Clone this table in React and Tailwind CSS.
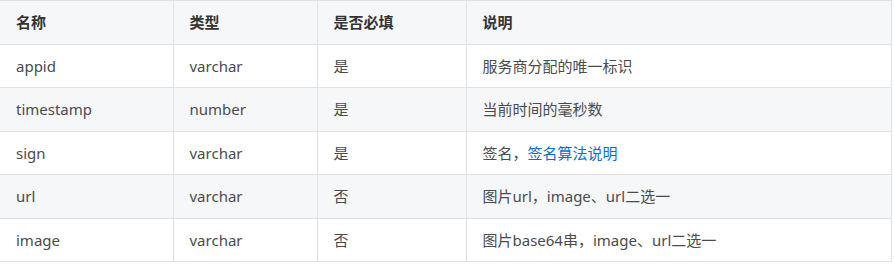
export default function App() {
  const rows = [
    ["appid", "varchar", "是", <>服务商分配的唯一标识</>],
    ["timestamp", "number", "是", <>当前时间的毫秒数</>],
    ["sign", "varchar", "是", <>签名，<a className="text-[#0a6ed1]">签名算法说明</a></>],
    ["url", "varchar", "否", <>图片url，image、url二选一</>],
    ["image", "varchar", "否", <>图片base64串，image、url二选一</>],
  ];
  return (
    <div className="w-[894px] h-[264px] bg-white" style={{ fontFamily: '"Noto Sans", "Noto Sans CJK SC", sans-serif' }}>
      <table className="w-[892px] border-collapse text-[15px] table-fixed">
        <colgroup>
          <col className="w-[173px]" />
          <col className="w-[144px]" />
          <col className="w-[149px]" />
          <col />
        </colgroup>
        <thead>
          <tr className="bg-[#f6f7f9] h-[43.5px]">
            {["名称", "类型", "是否必填", "说明"].map((h, i) => (
              <th key={i} className={`text-left font-bold text-[#333] px-4 border-t border-b border-r border-[#dfe2e5] ${i === 0 ? "border-l-0" : "border-l"}`}>
                {h}
              </th>
            ))}
          </tr>
        </thead>
        <tbody>
          {rows.map((r, ri) => (
            <tr key={ri} className={`h-[43.5px] ${ri % 2 === 1 ? "bg-[#f6f7f9]" : "bg-white"}`}>
              {r.map((c, ci) => (
                <td key={ci} className={`px-4 text-[#4b4b4b] border-b border-r border-[#dfe2e5] ${ci === 0 ? "border-l-0" : "border-l"}`}>
                  {c}
                </td>
              ))}
            </tr>
          ))}
        </tbody>
      </table>
    </div>
  );
}
